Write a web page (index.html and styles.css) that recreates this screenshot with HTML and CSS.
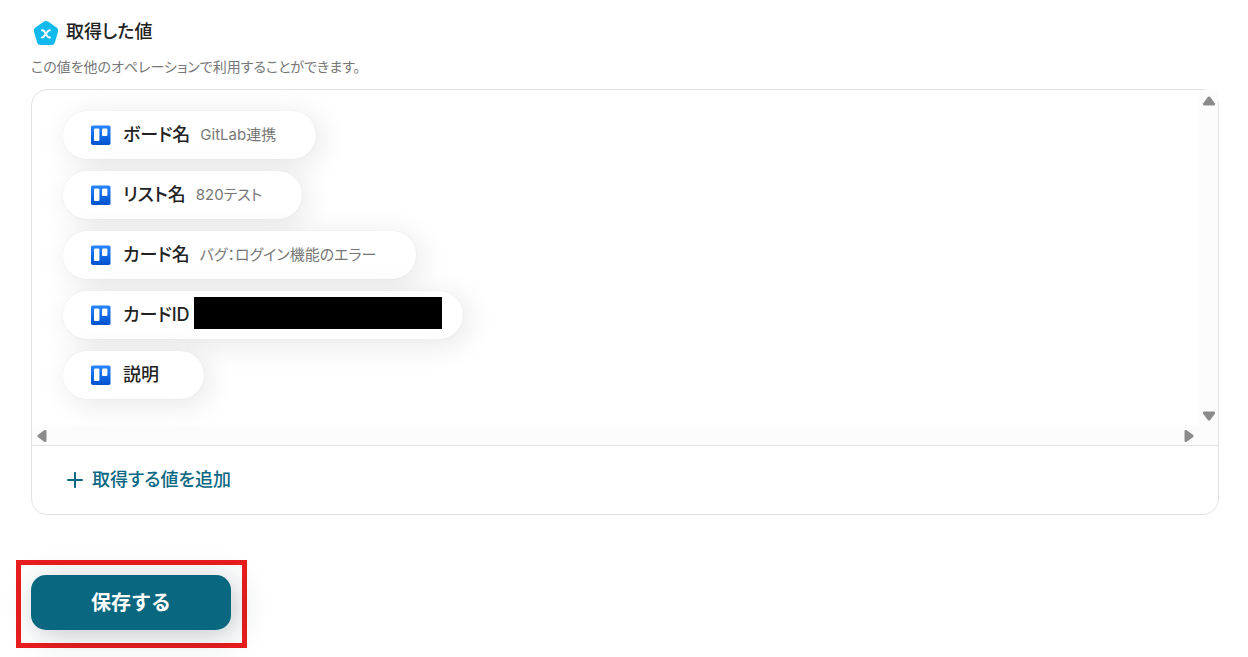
FILE: index.html
```html
<!DOCTYPE html>
<html lang="ja">
<head>
<meta charset="utf-8">
<meta name="viewport" content="width=device-width, initial-scale=1">
<title>取得した値</title>
<link rel="stylesheet" href="styles.css">
</head>
<body>
<svg class="defs" aria-hidden="true">
  <defs>
    <linearGradient id="board-fill" x1="0" y1="0" x2="0" y2="1">
      <stop offset="0" stop-color="#2684ff"/>
      <stop offset="1" stop-color="#0052cc"/>
    </linearGradient>
    <symbol id="board" viewBox="0 0 20 20">
      <rect x="0" y=".5" width="19.500" height="19.500" rx="1.800" fill="url(#board-fill)"/>
      <rect x="3" y="3.500" width="5.400" height="12.500" rx="1" fill="#fff"/>
      <rect x="11" y="3.500" width="5.400" height="7.500" rx="1" fill="#fff"/>
    </symbol>
  </defs>
</svg>
<main class="page">
  <header class="heading">
    <svg class="heading-icon" viewBox="0 0 26 26" aria-hidden="true">
      <path d="M10.600 1.700Q13 .1 15.400 1.700L23.600 7.600Q25.700 9.200 25 11.700L21.900 22.400Q21 24.900 18.500 24.900H7.500Q5 24.900 4.100 22.400L1 11.700Q.3 9.200 2.400 7.600Z" fill="#11b9ed"/>
      <path d="M9 10.300C10.700 9.900 11.300 11 12.800 13.900C14.200 16.800 15 17.900 17 17.400M16.800 10.300C15.100 10 14.200 11.700 12.800 13.900C11.300 16.100 10.500 17.800 8.800 17.400" fill="none" stroke="#fff" stroke-width="2" stroke-linecap="round"/>
    </svg>
    <h1 class="title">取得した値</h1>
  </header>
  <p class="description">この値を他のオペレーションで利用することができます。</p>

  <section class="panel">
    <div class="viewer">
      <ul class="values">
        <li class="chip"><svg class="chip-icon" aria-hidden="true"><use href="#board"/></svg><span class="name">ボード名</span><span class="value">GitLab連携</span></li>
        <li class="chip"><svg class="chip-icon" aria-hidden="true"><use href="#board"/></svg><span class="name">リスト名</span><span class="value">820テスト</span></li>
        <li class="chip"><svg class="chip-icon" aria-hidden="true"><use href="#board"/></svg><span class="name">カード名</span><span class="value">バグ：ログイン機能のエラー</span></li>
        <li class="chip chip-masked"><svg class="chip-icon" aria-hidden="true"><use href="#board"/></svg><span class="name">カードID</span><span class="mask"></span></li>
        <li class="chip"><svg class="chip-icon" aria-hidden="true"><use href="#board"/></svg><span class="name">説明</span></li>
      </ul>
      <div class="track track-y">
        <svg class="arrow" viewBox="0 0 14 10" aria-hidden="true"><path d="M6 .8Q7 0 8 .8L13 7.500Q13.400 9.500 12 9.500H2Q.6 9.500 1 7.500Z"/></svg>
        <svg class="arrow" viewBox="0 0 14 10" aria-hidden="true"><path d="M6 9.200Q7 10 8 9.200L13 2.500Q13.400.5 12 .5H2Q.6.5 1 2.500Z"/></svg>
      </div>
      <div class="track track-x">
        <svg class="arrow-side" viewBox="0 0 10 14" aria-hidden="true"><path d="M.8 6Q0 7 .8 8L7.500 13Q9.500 13.400 9.500 12V2Q9.500.6 7.500 1Z"/></svg>
        <svg class="arrow-side" viewBox="0 0 10 14" aria-hidden="true"><path d="M9.200 6Q10 7 9.200 8L2.500 13Q.5 13.400.5 12V2Q.5.6 2.500 1Z"/></svg>
      </div>
      <div class="corner"></div>
    </div>
    <div class="panel-footer">
      <button class="add" type="button">
        <svg class="plus" viewBox="0 0 16 16" aria-hidden="true"><path d="M8 .9V15.100M.9 8H15.100" stroke="currentColor" stroke-width="2" stroke-linecap="round"/></svg>
        取得する値を追加
      </button>
    </div>
  </section>

  <div class="highlight">
    <button class="save" type="button">保存する</button>
  </div>
</main>
</body>
</html>
```

FILE: styles.css
```css
* { box-sizing: border-box; }
body {
  margin: 0;
  background: #fff;
  color: #222;
  font-family: Inter, "Noto Sans CJK JP", sans-serif;
  font-feature-settings: "palt";
}
button { font: inherit; font-feature-settings: inherit; cursor: pointer; }
.defs { position: absolute; width: 0; height: 0; }
.page { padding: 20px 29px 9px 31px; }
.heading { display: flex; align-items: flex-start; gap: 7px; padding-left: 2px; height: 26px; }
.heading-icon { width: 26px; height: 26px; }
.title { margin: 0; font-size: 18px; line-height: 24px; font-weight: 500; }
.description { margin: 11px 0 12px; font-size: 14px; line-height: 20px; color: #777; }

.panel { border: 1px solid #e2e2e2; border-radius: 16px; }
.viewer {
  display: grid;
  grid-template-columns: 1fr 19px;
  grid-template-rows: auto 19px;
  border-bottom: 1px solid #e2e2e2;
}
.values {
  display: flex;
  flex-direction: column;
  align-items: flex-start;
  gap: 12px;
  margin: 0;
  padding: 21px 31px 27px;
  list-style: none;
}
.chip {
  display: flex;
  align-items: center;
  height: 48px;
  padding: 0 45px 0 28px;
  border-radius: 24px;
  background: #fff;
  box-shadow: 0 0 2px rgba(0, 0, 0, .06), 5px 5px 30px rgba(0, 0, 0, .1);
}
.chip:has(.value) { padding-right: 40px; }
.chip-masked { padding-right: 21px; }
.chip-icon { width: 20px; height: 20px; margin-right: 12px; }
.name { font-size: 18px; line-height: 24px; font-weight: 500; }
.value { margin-left: 10px; font-size: 15px; line-height: 24px; color: #777; }
.mask { width: 248px; height: 32px; margin: 6px 0 10px 4px; background: #000; }

.track { display: flex; justify-content: space-between; align-items: center; background: #fcfcfc; }
.track-y { flex-direction: column; padding: 6px 0 5px; }
.track-x { padding: 0 5px; }
.corner { background: #fcfcfc; }
.arrow { width: 14px; height: 10px; fill: #8b8b8b; }
.arrow-side { width: 10px; height: 14px; fill: #8b8b8b; }

.panel-footer { padding: 20px 35px; }
.add {
  display: flex;
  align-items: center;
  gap: 9px;
  padding: 0;
  border: 0;
  background: none;
  color: #0b6883;
  font-size: 18px;
  line-height: 28px;
  font-weight: 500;
}
.plus { width: 16px; height: 16px; }

.highlight { width: fit-content; margin: 45px 0 0 -15px; padding: 10px 11px 13px 10px; border: 5px solid #e91d1d; }
.save {
  display: block;
  padding: 14px 60px 13px;
  border: 0;
  border-radius: 15px;
  background: #0a6780;
  color: #fff;
  font-size: 20px;
  line-height: 28px;
  font-weight: 700;
  font-feature-settings: normal;
  box-shadow: 5px 5px 30px rgba(10, 40, 55, .25);
}
```
